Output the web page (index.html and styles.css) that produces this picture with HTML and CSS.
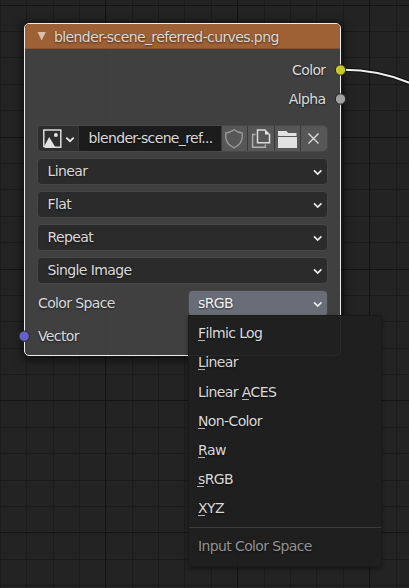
FILE: index.html
```html
<!DOCTYPE html>
<html lang="en">
<head>
<meta charset="utf-8">
<title>Image Texture node</title>
<link rel="stylesheet" href="styles.css">
</head>
<body>
<main class="editor">
  <svg class="grid" width="409" height="588" shape-rendering="crispEdges">
    <path class="minor" d="M.5 0V588M26.5 0V588M53.5 0V588M79.5 0V588M132.5 0V588M158.5 0V588M184.5 0V588M211.5 0V588M264.5 0V588M290.5 0V588M316.5 0V588M343.5 0V588M396.5 0V588M0 31.5H409M0 57.5H409M0 84.5H409M0 110.5H409M0 163.5H409M0 189.5H409M0 216.5H409M0 242.5H409M0 295.5H409M0 321.5H409M0 348.5H409M0 374.5H409M0 427.5H409M0 453.5H409M0 480.5H409M0 506.5H409M0 559.5H409M0 585.5H409"/>
    <path class="major" d="M105.5 0V588M237.5 0V588M369.5 0V588M0 5.5H409M0 137.5H409M0 269.5H409M0 400.5H409M0 532.5H409"/>
  </svg>

  <section class="node">
    <header class="title"><svg class="tri" width="10" height="9"><path d="M.5 0H8.8L4.7 8.6Z"/></svg><span>blender-scene_referred-curves.png</span></header>
    <div class="output"><span>Color</span></div>
    <div class="output"><span>Alpha</span></div>
    <div class="picker">
      <div class="cell browse">
        <svg width="40" height="25" viewBox="0 0 40 25"><path class="line" d="M15 3.9H5.8V21M7 21.2H22.8V3.9H14"/><path class="solid" d="M5.5 21.6L11.2 11L17.5 21.6Z"/><circle class="solid" cx="17.9" cy="9" r="2"/><path class="chev" d="M28.3 11.6L32 15.2L35.7 11.6"/></svg>
      </div>
      <div class="filename">blender-scene_ref...</div>
      <div class="cell narrow"><svg width="25" height="25"><path class="shield" d="M12 3.8C9.6 5.6 7 6.7 3.8 7V11.5C4.1 16 7.1 19.5 12 21.8C16.9 19.5 19.9 16 20.2 11.5V7C17 6.7 14.4 5.6 12 3.8Z"/></svg></div>
      <div class="cell"><svg width="26" height="25"><path class="dim" d="M7.5 8.5H4.6V21.3H17.4V18.6"/><path class="line" d="M17.3 4H9.5V16.8H21.5V8"/><path class="solid" d="M17 3.2L22.3 8.5H17Z"/></svg></div>
      <div class="cell narrow"><svg width="25" height="25"><path class="folder" d="M3 5H11.5L13 7H21.5V10H3ZM3 11H22V22H3Z"/></svg></div>
      <div class="cell"><svg width="26" height="25"><path class="line cross" d="M7.5 7.6L17.5 17.6M17.5 7.6L7.5 17.6"/></svg></div>
    </div>
    <div class="field"><span>Linear</span><svg class="arrow" width="10" height="7"><path class="chev" d="M1 1.4L4.7 5L8.4 1.4"/></svg></div>
    <div class="field"><span>Flat</span><svg class="arrow" width="10" height="7"><path class="chev" d="M1 1.4L4.7 5L8.4 1.4"/></svg></div>
    <div class="field"><span>Repeat</span><svg class="arrow" width="10" height="7"><path class="chev" d="M1 1.4L4.7 5L8.4 1.4"/></svg></div>
    <div class="field"><span>Single Image</span><svg class="arrow" width="10" height="7"><path class="chev" d="M1 1.4L4.7 5L8.4 1.4"/></svg></div>
    <div class="space-row"><span>Color Space</span><div class="field active"><span>sRGB</span><svg class="arrow" width="10" height="7"><path class="chev" d="M1 1.4L4.7 5L8.4 1.4"/></svg></div></div>
    <div class="input"><span>Vector</span></div>
  </section>

  <svg class="links" width="409" height="588">
    <path class="link-edge" d="M341 69.8C367 69.5 389 74 411 83.5"/>
    <path class="link" d="M341 69.8C367 69.5 389 74 411 83.5"/>
    <circle class="socket yellow" cx="340.5" cy="70" r="5.2"/>
    <circle class="socket gray" cx="340.5" cy="99" r="5.2"/>
    <circle class="socket blue" cx="24.2" cy="336.2" r="5.2"/>
  </svg>

  <div class="menu">
    <div class="item"><u>F</u>ilmic Log</div>
    <div class="item tall"><u>L</u>inear</div>
    <div class="item">Linear <u>A</u>CES</div>
    <div class="item"><u>N</u>on-Color</div>
    <div class="item"><u>R</u>aw</div>
    <div class="item"><u class="early">s</u>RGB</div>
    <div class="item"><u>X</u>YZ</div>
    <div class="caption">Input Color Space</div>
  </div>
</main>
</body>
</html>
```
FILE: styles.css
```css
* { box-sizing: border-box; }
body { margin: 0; background: #232323; }
.editor {
  position: relative;
  width: 409px;
  height: 588px;
  overflow: hidden;
  padding: 23px 0 0 24px;
  font: 14px/20px "DejaVu Sans", sans-serif;
  letter-spacing: -0.62px;
  color: #dadada;
  text-shadow: 0 1px 2px rgba(0, 0, 0, .6);
  white-space: nowrap;
}
svg { display: block; fill: none; flex: none; }
.grid, .links { position: absolute; left: 0; top: 0; }
.minor { stroke: #1b1b1b; }
.major { stroke: #131313; }

.node {
  position: relative;
  width: 316.5px;
  height: 333px;
  border: 1px solid #ededed;
  border-radius: 5px;
  background: rgba(67, 67, 67, .91);
  box-shadow: 0 2px 10px 2px rgba(0, 0, 0, .6);
  padding: 0 13px;
}
.title {
  display: flex;
  align-items: center;
  height: 25px;
  margin: 0 -13px;
  padding: 1px 0 0 12px;
  gap: 7px;
  border-radius: 4px 4px 0 0;
  background: #9e6035;
  border-bottom: 1px solid #85502d;
  letter-spacing: -0.6px;
}
.tri { fill: #d8bfae; }
.output { height: 29px; padding: 11px 1px 0 0; text-align: right; }
.picker {
  display: flex;
  width: 288.5px;
  height: 25px;
  margin-top: 19px;
  gap: 1px;
  border-radius: 4px;
  overflow: hidden;
  background: #393939;
  box-shadow: 0 0 0 1px #484848;
}
.cell { width: 26px; background: #575757; flex: none; }
.narrow { width: 25px; }
.browse { width: 40px; background: #2e2e2e; }
.filename { width: 142px; flex: none; padding: 2px 0 0 9.5px; background: #1c1c1c; letter-spacing: -0.65px; }
.field {
  display: flex;
  align-items: center;
  justify-content: space-between;
  width: 288.5px;
  height: 25px;
  margin-top: 8px;
  padding: 0 4px 2px 9.5px;
  border-radius: 4px;
  background: #2b2b2b;
  box-shadow: 0 0 0 1px #464646;
}
.arrow { position: relative; top: 2px; }
.space-row {
  display: flex;
  justify-content: space-between;
  width: 288.5px;
  margin-top: 8px;
  line-height: 25px;
}
.field.active {
  width: 137.5px;
  margin: 0;
  padding: 0 4px 0 9px;
  background: #686d77;
  color: #f2f2f2;
}
.active .arrow { top: 1px; }
.input { padding-top: 10px; }

.line { stroke: #dcdcdc; stroke-width: 1.5; }
.cross { stroke-width: 1.4; }
.solid, .folder { fill: #e2e2e2; }
.chev { stroke: #ebebeb; stroke-width: 1.7; }
.shield { stroke: #999; stroke-width: 1.4; }
.dim { stroke: #b0b0b0; stroke-width: 1.4; }
.link-edge { stroke: #101010; stroke-width: 4; }
.link { stroke: #f0f0f0; stroke-width: 2; }
.socket { stroke: #252525; stroke-width: 1; }
.yellow { fill: #c7c729; }
.gray { fill: #a1a1a1; }
.blue { fill: #6363c7; }

.menu {
  position: absolute;
  left: 188px;
  top: 315px;
  width: 194px;
  height: 252px;
  padding-top: 3px;
  background: rgba(31, 31, 31, .96);
  border: 1px solid #1a1a1a;
  border-radius: 0 0 4px 4px;
  box-shadow: 0 2px 4px rgba(0, 0, 0, .35);
}
.item { height: 29px; padding: 4px 0 0 9px; }
.tall { height: 30px; }
.item u {
  text-decoration: none;
  display: inline-block;
  height: 18px;
  line-height: 20px;
  vertical-align: top;
  background: linear-gradient(#b5b5b5, #b5b5b5) 0 100% / 7px 1px no-repeat;
}
.item .early { margin-left: -1px; padding-left: 1px; }
.caption {
  margin-top: 4px;
  padding: 8px 0 0 9px;
  border-top: 1px solid #3b3b3b;
  color: #929292;
}
```
